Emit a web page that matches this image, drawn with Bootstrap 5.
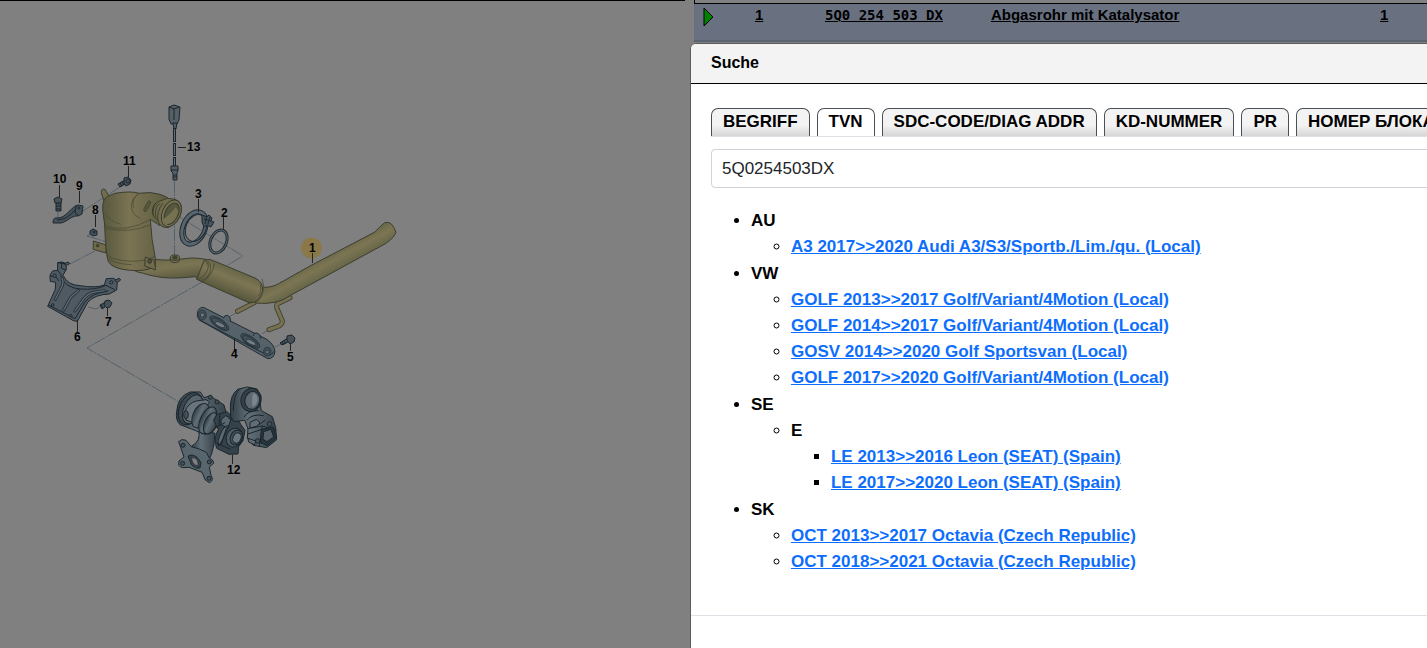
<!DOCTYPE html>
<html lang="de">
<head>
<meta charset="utf-8">
<meta name="viewport" content="width=device-width, initial-scale=1">
<title>Suche</title>
<link rel="stylesheet" href="https://cdn.jsdelivr.net/npm/bootstrap@5.3.0/dist/css/bootstrap.min.css">
<style>
  body { font-family: "Liberation Sans", Arial, sans-serif; background: #808080; color: #000; }
  .illustration { width: 48%; border-top: 1px solid #000; }
  .illustration svg { display: block; width: 100%; }
  .illustration text { font: bold 12px "Liberation Sans", Arial, sans-serif; fill: #000; }
  .parts { margin-left: 9px; }
  .parts-edge { height: 3px; border-left: 1px solid #000; }
  .parts-table { width: 100%; table-layout: fixed; border-top: 1px solid #000; border-bottom: 2px solid #5b6371; font-size: 15px; line-height: 20px; font-weight: 700; }
  .parts-table td { height: 37px; padding: 1px 0 0; vertical-align: top; background: #697180; }
  .parts-table a { color: #000; }
  .part-no { font-family: "DejaVu Sans Mono", monospace; font-size: 14px; }
  .overlay { padding: 43px 0 0 calc(48% + 5px); }
  .search-dialog { width: 920px; height: 100%; min-height: 660px; border: 1px solid #5c5c5c; border-radius: 6px; font-weight: 700; }
  .search-head { background: #f3f3f3; border-bottom: 1px solid #000; border-radius: 5px 5px 0 0; padding: 9px 20px 10px; }
  .search-head h1 { font-size: 16px; line-height: 20px; font-weight: 700; }
  .search-main { padding: 24px 20px 39px; font-size: 17px; line-height: 26px; border-bottom: 1px solid #dee2e6; }
  .search-tabs { gap: 7px; border-bottom: 1px solid #dee2e6; white-space: nowrap; }
  .search-tabs button { border: 1px solid #495057; border-bottom: 0; border-radius: 7px 7px 0 0; padding: 0 11px 1px; background: linear-gradient(#f3f3f3 60%, #d6d6d6); font-weight: 700; color: #000; }
  .search-tabs button.active { background: #fff; }
  .search-main .form-control { font-size: 17px; line-height: 24px; height: 39px; padding: 6px 10px; margin-top: 12px; border-color: #ced4da; border-radius: 4px; color: #212529; }
  .results, .results ul { padding-left: 40px; margin: 0; }
  .results { margin-top: 20px; }
  .results > li { margin-bottom: 1px; }
  .results a { color: #0d6efd; }
</style>
<script src="https://cdn.jsdelivr.net/npm/bootstrap@5.3.0/dist/js/bootstrap.bundle.min.js"></script>
</head>
<body class="vh-100 overflow-hidden">
<div class="d-flex h-100">
  <section class="illustration flex-shrink-0" aria-label="Abgasanlage">
    <svg viewBox="0 1 685 647" role="img" aria-label="Abgasrohr mit Katalysator, Teile 1 bis 13">
      <defs>
        <linearGradient id="tube" x1="0" y1="0" x2=".45" y2="1"><stop offset="0" stop-color="#686546"/><stop offset=".5" stop-color="#7b7553"/><stop offset="1" stop-color="#59583e"/></linearGradient>
        <linearGradient id="pipe" gradientUnits="userSpaceOnUse" x1="420" y1="140" x2="455" y2="205"><stop offset="0" stop-color="#656647"/><stop offset=".4" stop-color="#7c7553"/><stop offset="1" stop-color="#5d6044"/></linearGradient>
        <linearGradient id="muffler" gradientUnits="userSpaceOnUse" x1="165" y1="175" x2="135" y2="250"><stop offset="0" stop-color="#656546"/><stop offset=".4" stop-color="#7d7654"/><stop offset="1" stop-color="#56563c"/></linearGradient>
        <linearGradient id="can"><stop offset="0" stop-color="#57583e"/><stop offset=".4" stop-color="#7b7453"/><stop offset="1" stop-color="#5b5a3f"/></linearGradient>
        <linearGradient id="steel"><stop offset="0" stop-color="#323e46"/><stop offset=".4" stop-color="#626e76"/><stop offset="1" stop-color="#38434b"/></linearGradient>
      </defs>
      <g fill="none" stroke="#52616a" stroke-width="1" stroke-dasharray="12 1 2 1">
        <path d="M174.500 181V256M83 211l40-26M163 207l80 49-32 19M202 282L87 348l92 54M70 264l25-13M58 212v9M87 236l20 6M87 236l8-4M227 318l11-6M262 334l9-6M275 347l9-4M88 307l8 2 6-3"/>
      </g>

      <!-- catalytic converter -->
      <g transform="translate(80 170) scale(.33333)" stroke="#3b3d2f" stroke-width="3" stroke-linejoin="round">
        <path fill="#706c4c" d="M66 75q-6-15 4-18 7 0 9 8l14 24-17 14z"/>
        <path fill="#706c4c" d="M40 213l38 12v24l-38-11z"/><circle cx="53" cy="227" r="4" fill="#45462f"/>
        <path fill="url(#tube)" d="M190 285L215 266C260 275 300 267 335 264Q380 265 398 275L375 333 345 320C290 326 245 328 190 310Q160 304 160 298z"/>
        <path fill="url(#can)" d="M68 118Q66 87 85 78L105 70Q155 62 178 70 212 64 240 73 262 80 270 90L240 167 211 148Q214 210 226 265V290Q195 305 150 301 98 297 85 275 77 250 74 165z"/>
        <g fill="none" stroke="#45462f" stroke-width="2"><path d="M73 168q65 22 139-20M74 175q75 17 138-11M77 247q10 24 75 27 45 0 72-14M80 259q15 23 75 25M178 70c-32 20-32 62 4 75M175 73q-20 10-15 40"/></g>
        <path d="M75 130q13 24 48 33" fill="none" stroke="#4a4b34" stroke-width="2"/>
        <path fill="#57573d" stroke-width="2" d="M194 112l9-16q4-6 8-2 2 3 0 7l-11 21q-4 5-8 1-3-3 2-11z"/>
        <path fill="#716c4c" d="M221 139Q210 112 230 97L262 85 285 88Q309 98 304 125 297 157 265 173 239 174 234 151z"/>
        <path d="M221 139Q214 115 232 100M228 143q-7-27 12-43M234 151q-5-28 15-51" fill="none"/>
        <ellipse cx="274" cy="130" rx="27" ry="42" transform="rotate(24 274 130)" fill="#7b7553"/>
        <ellipse cx="275" cy="131" rx="20" ry="34" transform="rotate(24 275 131)" fill="#57573d"/>
        <path fill="#777252" stroke="none" d="M250 147q20-12 37-35l8 11q-7 35-34 40-9-2-11-16z"/>
        <path fill="#706b4b" d="M196 261l27 10 4 29-33-12z"/><circle cx="209" cy="274" r="6" fill="#4c4c36"/>
        <path fill="#746f4f" d="M271 264v9q13 10 27 0v-9z"/><ellipse cx="285" cy="263" rx="14" ry="8" fill="#706b4b"/><ellipse cx="285" cy="263" rx="7" ry="4" fill="#45462f"/>
      </g>

      <!-- tail pipe and muffler -->
      <g transform="translate(180 210) scale(.33333)" stroke="#3b3d2f" stroke-width="3" stroke-linejoin="round">
        <g fill="none" stroke-linecap="round"><path d="M173 304l50-26M330 263l-37 18q-5 4-2 14l16 37q1 10-10 16l-30 11" stroke-width="15"/><path d="M173 304l50-26M330 263l-37 18q-5 4-2 14l16 37q1 10-10 16l-30 11" stroke="#777151" stroke-width="10"/></g>
        <path fill="url(#pipe)" d="M245 232Q275 234 298 220L390 168 585 66Q600 49 614 38 637 31 648 68 637 92 600 110L330 257Q292 286 226 279z"/>
        <path fill="url(#muffler)" d="M50 208L73 150Q90 145 105 154L225 204Q252 217 247 245 240 278 209 279L80 222z"/>
        <path fill="none" stroke-width="2" d="M74 151q20 12 4 38-10 18-28 19M83 153q16 15 3 42-6 13-22 17M103 160q-2 31-35 57"/>
        <path fill="none" stroke="#55563d" stroke-width="3" d="M246 207q15 37-13 69M240 220q7 23-5 39"/>
        <path fill="#56626a" stroke="#1f2b33" d="M52 310Q55 292 70 292L260 388Q284 405 285 425 282 447 263 446L58 330Q50 321 52 310z"/>
        <path fill="none" stroke="#1f2b33" d="M58 330l205 106q14 0 19-12"/>
        <path fill="#56626a" stroke="#1f2b33" d="M130 326q1-10 12-10 10 3 10 18M220 378q-1-9 11-9 11 3 11 17"/>
        <g fill="#435058" stroke="#1f2b33" stroke-width="2"><ellipse cx="67" cy="315" rx="12" ry="15"/><ellipse cx="262" cy="425" rx="11" ry="13"/><ellipse cx="118" cy="340" rx="34" ry="13" transform="rotate(35 118 340)"/><ellipse cx="118" cy="341" rx="27" ry="10" transform="rotate(35 118 341)"/><ellipse cx="211" cy="393" rx="34" ry="13" transform="rotate(35 211 393)"/><ellipse cx="211" cy="394" rx="27" ry="10" transform="rotate(35 211 394)"/></g>
        <g fill="#747d83" stroke="#1f2b33" stroke-width="2"><ellipse cx="120" cy="344" rx="16" ry="6" transform="rotate(25 120 344)"/><ellipse cx="213" cy="397" rx="16" ry="6" transform="rotate(25 213 397)"/><circle cx="67" cy="315" r="6"/><circle cx="262" cy="426" r="5"/></g>
      </g>

      <!-- clamp and gasket -->
      <g fill="none" stroke="#1f2b33">
        <ellipse cx="194" cy="228" rx="11" ry="17" transform="rotate(24 194 228)" stroke-width="5"/>
        <ellipse cx="194" cy="228" rx="11" ry="17" transform="rotate(24 194 228)" stroke="#5a666e" stroke-width="3"/>
        <ellipse cx="196" cy="228" rx="10" ry="14" transform="rotate(24 196 228)"/>
        <path fill="#465159" d="M202 215l5 2 2-2 3 3-1 3 3 1-3 5-4-2-3 2-2-5z"/><path d="M207 215l-2 9M210 217l-2 7M204 219l7 2"/>
        <ellipse cx="218.500" cy="241.500" rx="8" ry="12" transform="rotate(23 218.500 241.500)" stroke-width="3"/>
        <ellipse cx="218.500" cy="241.500" rx="8" ry="12" transform="rotate(23 218.500 241.500)" stroke="#5a666e"/>
      </g>

      <!-- lambda probe -->
      <g fill="#545f66" stroke="#1b262d">
        <path d="M169 107l5-2 6 2-1 13-2 4h-6l-2-5z"/><path d="M169 107l5 2 5-2M174 109v11" fill="none"/>
        <path d="M173 123h4l-1 6h-2z"/><path d="M174.500 128v14M174.500 143v13M174.500 157v12" stroke-width="3"/><path d="M174.500 129v12M174.500 144v11M174.500 158v10" stroke="#67727a"/>
        <path d="M171 166h7v5l-1 2v7h-4v-7l-2-2z"/><path d="M171 170h7M173 175h4M173 177h4"/>
      </g>

      <!-- screws and nut -->
      <g fill="#46515a" stroke="#1b262d">
        <path d="M118 184l7-4 2 3-7 4z"/><path d="M120 183l2 3M122 182l2 3"/><path d="M124 178l4-1 3 3-1 4-4 2-2-3z"/><circle cx="128" cy="181" r="2"/>
        <path d="M56 203h5v8h-5z"/><path d="M54 199l4-2 4 2-1 4h-6zM56 206h5M56 209h5"/>
        <path d="M100 305l6-3 2 3-6 4z"/><path d="M105 301l4-1 3 3-2 4-3 1-3-3zM101 305l2 3"/>
        <path d="M280 343l8-5 2 3-8 4z"/><path d="M287 336l5-1 3 3-1 4-4 2-3-4zM282 342l2 3M284 341l2 3"/>
        <path d="M90 231l3-2 4 2v4l-4 1-3-2z"/><circle cx="94" cy="232" r="1"/>
      </g>

      <!-- small holder -->
      <g fill="#46515a" stroke="#1b262d"><path d="M53 223Q53 217 58 218C66 218 72 206 78 205l5 1-1 8-4 2C72 215 67 222 61 223z"/><path d="M76 206l-1 7 3 2M57 220q10 0 18-10" fill="none"/><circle cx="79" cy="208" r="1"/></g>

      <!-- bracket -->
      <g transform="translate(40 240) scale(.33333)" fill="#4f5a62" stroke="#1b262d" stroke-width="3" stroke-linejoin="round">
        <path d="M30 105L38 93 53 91V68L66 66 78 71 79 88 69 106Q83 136 120 137 169 145 193 135L199 116 222 115 232 125 230 150 208 162Q164 164 144 186L112 244 100 242 23 199 46 148 47 127 31 124z"/>
        <path d="M62 107Q75 144 120 147 168 151 198 136l26 13M25 195l80 41 30-50q22-28 70-33M53 91l12 16M31 108l17 3 9 12M53 68l24 4M66 67l-2 18 14 5" fill="none"/>
        <path d="M72 71l13-5 4 5-10 5zM224 121l14-6 4 5-10 7z"/>
        <g fill="none" stroke="#232f37" stroke-width="9" stroke-linecap="round"><path d="M66 115q7 15-3 30L46 178M115 152L92 172 71 210M193 152l-34 5q-17 5-28 20L105 213"/></g>
        <g fill="none" stroke="#616c74" stroke-width="4" stroke-linecap="round"><path d="M66 115q7 15-3 30L46 178M115 152L92 172 71 210M193 152l-34 5q-17 5-28 20L105 213"/></g>
        <circle cx="38" cy="195" r="4"/><circle cx="92" cy="227" r="4"/><circle cx="44" cy="107" r="5"/><circle cx="214" cy="127" r="5"/>
      </g>

      <!-- turbocharger -->
      <g transform="translate(160 370) scale(.33333)" fill="#455159" stroke="#1a262d" stroke-width="3" stroke-linejoin="round">
        <path fill="url(#steel)" d="M116 180Q124 214 94 229L99 258 147 270Q164 235 165 190z"/>
        <path fill="#59656d" d="M56 215Q64 205 78 211L94 230Q120 236 139 247L148 264Q161 269 161 280L148 291 153 316Q163 332 148 338L136 330 126 307 87 292 68 293Q52 290 57 273L72 261z"/>
        <path fill="#39444c" d="M84 259q12-9 27 3l12 15-3 17q-14 4-25-9z"/><path fill="#808080" stroke-width="2" d="M95 263q11-2 18 10l2 15q-20-3-20-25z"/>
        <circle cx="69" cy="226" r="6"/><circle cx="68" cy="280" r="6"/><circle cx="148" cy="276" r="6"/><circle cx="147" cy="325" r="6"/>
        <path fill="url(#steel)" d="M50 125Q53 78 91 66L121 66 132 83 151 78 192 105 198 126 172 155Q166 194 135 193L94 177 60 164Q46 150 50 125z"/>
        <ellipse cx="91" cy="116" rx="32" ry="51" transform="rotate(24 91 116)" fill="#3b464e"/><ellipse cx="98" cy="118" rx="27" ry="46" transform="rotate(24 98 118)" fill="#59656d"/>
        <path fill="#69747b" d="M74 126q10-27 35-33l29-4q18 8 3 16-35 4-44 52l-19-7z"/><ellipse cx="78" cy="134" rx="7" ry="12"/>
        <g fill="url(#steel)"><ellipse cx="122" cy="137" rx="23" ry="39" transform="rotate(25 122 137)"/><ellipse cx="143" cy="151" rx="22" ry="43" transform="rotate(25 143 151)"/><ellipse cx="152" cy="160" rx="18" ry="34" transform="rotate(25 152 160)"/></g>
        <path fill="#36424a" d="M170 134l31-9 15 14 14 3 13 22 12 17-6 31-13 18-2 22-27 1-37-18q-11-30 5-56l-14-28z"/>
        <path fill="#5c6870" d="M183 150l14-13 17 8-10 29-20-10zM180 195q10-28 27-29l-17 39-14 24q-5-17 4-34z"/>
        <path fill="none" d="M164 175l31-17M180 134l-3 34M205 145l31 10M169 219l42 19M199 175l-16 50M220 185l29 8"/>
        <ellipse cx="223" cy="203" rx="24" ry="29" transform="rotate(22 223 203)" fill="#505c64"/><ellipse cx="229" cy="203" rx="18" ry="23" transform="rotate(22 229 203)"/><ellipse cx="231" cy="204" rx="12" ry="16" transform="rotate(22 231 204)" fill="#6b767e"/>
        <path fill="url(#steel)" d="M211 113Q211 75 233 58L262 51 291 57 303 78 301 105 304 122 337 140 347 172 350 209 320 233 280 226 262 205 264 176 254 151 222 155 212 140z"/>
        <path fill="none" d="M238 58q-18 19-18 64M252 142q10-20 44-20M261 151q15-21 50-14M262 176l45-8 40 12M264 192l42-14M307 168l-9 63M316 150l-18 14"/>
        <ellipse cx="273" cy="90" rx="30" ry="35" transform="rotate(12 273 90)" fill="#343f47"/><ellipse cx="277" cy="91" rx="22" ry="27" transform="rotate(12 277 91)" fill="#5c6870"/><path fill="#7c858a" stroke="none" d="M279 70q15 2 13 22-5 18-15 17-2-20 2-39z"/>
        <path fill="#29353c" d="M304 178l36-7 8 33-26 23-20-8z"/><path fill="#566169" d="M311 185l22-7 8 23-20 14-12-7z"/><path fill="#626d75" d="M270 157l20-9 10 11-10 10-20 5zM264 205l23 8-3 12-18-9z"/>
        <circle cx="151" cy="82" r="6"/><circle cx="171" cy="96" r="6"/><circle cx="329" cy="162" r="7"/><circle cx="293" cy="213" r="7"/>
      </g>

      <circle cx="311.500" cy="248" r="10.500" fill="#8b7849"/>
      <path d="M128.500 166v11M59.500 185v12M79.500 191v12M95.500 215v12M198.500 199v13M223.500 217v12M312.500 253v10M178 147.500h8M77.500 320v12M107.500 308v8M234.500 338v12M290.500 343v8M232.500 455v9" stroke="#222" fill="none"/>
      <g><text x="187" y="151">13</text><text x="123" y="165">11</text><text x="53" y="183">10</text><text x="76" y="190">9</text><text x="92" y="214">8</text><text x="195" y="198">3</text><text x="221" y="217">2</text><text x="309" y="252">1</text><text x="74" y="341">6</text><text x="105" y="326">7</text><text x="231" y="358">4</text><text x="287" y="361">5</text><text x="227" y="474">12</text></g>
    </svg>
  </section>
  <section class="parts flex-grow-1" aria-label="Teileliste">
    <div class="parts-edge"></div>
    <table class="parts-table">
      <colgroup><col style="width:61px"><col style="width:70px"><col style="width:166px"><col><col style="width:47px"></colgroup>
      <tbody><tr>
        <td class="ps-2"><svg width="14" height="24" viewBox="0 0 14 24" aria-hidden="true"><path d="M2 3v18l9-9z" fill="#008000" stroke="#000"/></svg></td>
        <td><a href="#p1">1</a></td>
        <td class="part-no"><a href="#p1">5Q0 254 503 DX</a></td>
        <td><a href="#p1">Abgasrohr mit Katalysator</a></td>
        <td><a href="#p1">1</a></td>
      </tr></tbody>
    </table>
  </section>
</div>

<div class="overlay position-fixed top-0 start-0 w-100 h-100 overflow-hidden">
  <div class="search-dialog bg-white" role="dialog" aria-labelledby="searchTitle">
    <header class="search-head"><h1 class="m-0" id="searchTitle">Suche</h1></header>
    <div class="search-main">
      <div class="search-tabs d-flex" role="tablist">
        <button type="button" role="tab">BEGRIFF</button>
        <button type="button" role="tab" class="active" aria-selected="true">TVN</button>
        <button type="button" role="tab">SDC-CODE/DIAG ADDR</button>
        <button type="button" role="tab">KD-NUMMER</button>
        <button type="button" role="tab">PR</button>
        <button type="button" role="tab">НОМЕР БЛОКА</button>
      </div>
      <input class="form-control" type="text" aria-label="TVN" value="5Q0254503DX">
      <ul class="results">
        <li>AU
          <ul><li><a href="#a3">A3 2017&gt;&gt;2020 Audi A3/S3/Sportb./Lim./qu. (Local)</a></li></ul>
        </li>
        <li>VW
          <ul>
            <li><a href="#golf13">GOLF 2013&gt;&gt;2017 Golf/Variant/4Motion (Local)</a></li>
            <li><a href="#golf14">GOLF 2014&gt;&gt;2017 Golf/Variant/4Motion (Local)</a></li>
            <li><a href="#gosv">GOSV 2014&gt;&gt;2020 Golf Sportsvan (Local)</a></li>
            <li><a href="#golf17">GOLF 2017&gt;&gt;2020 Golf/Variant/4Motion (Local)</a></li>
          </ul>
        </li>
        <li>SE
          <ul><li>E
            <ul>
              <li><a href="#le13">LE 2013&gt;&gt;2016 Leon (SEAT) (Spain)</a></li>
              <li><a href="#le17">LE 2017&gt;&gt;2020 Leon (SEAT) (Spain)</a></li>
            </ul>
          </li></ul>
        </li>
        <li>SK
          <ul>
            <li><a href="#oct13">OCT 2013&gt;&gt;2017 Octavia (Czech Republic)</a></li>
            <li><a href="#oct18">OCT 2018&gt;&gt;2021 Octavia (Czech Republic)</a></li>
          </ul>
        </li>
      </ul>
    </div>
  </div>
</div>
</body>
</html>
